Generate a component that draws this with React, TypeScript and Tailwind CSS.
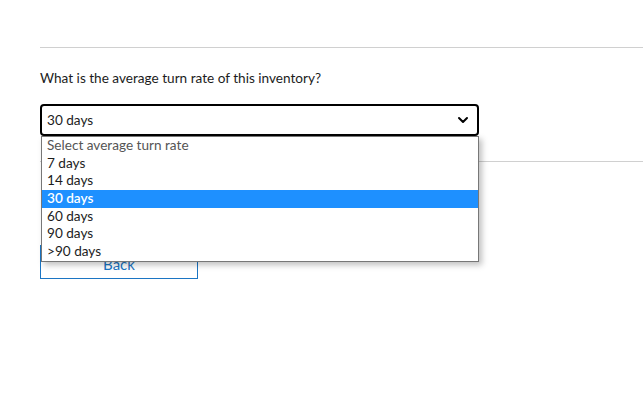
import React from 'react';
import { ChevronDown } from 'lucide-react';

const options = ['Select average turn rate', '7 days', '14 days', '30 days', '60 days', '90 days', '>90 days'];

const App: React.FC = () => (
    <div className="w-[643px] h-[396px] bg-white overflow-hidden pl-[40px] pt-[47px] text-[#222] font-['Lato','Open_Sans',sans-serif]">
        <div className="border-t border-[#d0d0d0] mr-[-40px]" />

        <p className="mt-[21px] text-[13.6px] leading-[18px] text-[#1c1c1c]">What is the average turn rate of this inventory?</p>

        {/* Select + open list */}
        <div className="relative mt-[17px] w-[439px]">
            <div className="h-[32px] flex items-center justify-between border-2 border-black rounded-[4px] pl-[5px] pr-[6px] text-[13.6px] text-[#1c1c1c]">
                <span>30 days</span>
                <ChevronDown size={16} strokeWidth={3} className="text-black" />
            </div>

            <div className="absolute z-10 left-[1px] right-0 top-[32px] bg-white border border-[#777] shadow-[3px_3px_6px_rgba(0,0,0,0.25)] text-[13.6px]">
                {options.map((opt, i) => (
                    <div
                        key={opt}
                        className={
                            i === 3
                                ? 'h-[17.7px] leading-[17.7px] pl-[5px] bg-[#1e90ff] text-white font-semibold'
                                : i === 0
                                ? 'h-[17.7px] leading-[17.7px] pl-[5px] text-[#555]'
                                : 'h-[17.7px] leading-[17.7px] pl-[5px] text-[#1c1c1c]'
                        }
                    >
                        {opt}
                    </div>
                ))}
            </div>
        </div>

        <div className="mt-[25px] border-t border-[#d0d0d0] mr-[-40px]" />

        <button className="mt-[83px] w-[158px] h-[34px] pt-[4px] border border-[#1b75c3] text-[#1b75c3] text-[15px] bg-white">
            Back
        </button>
    </div>
);

export default App;
